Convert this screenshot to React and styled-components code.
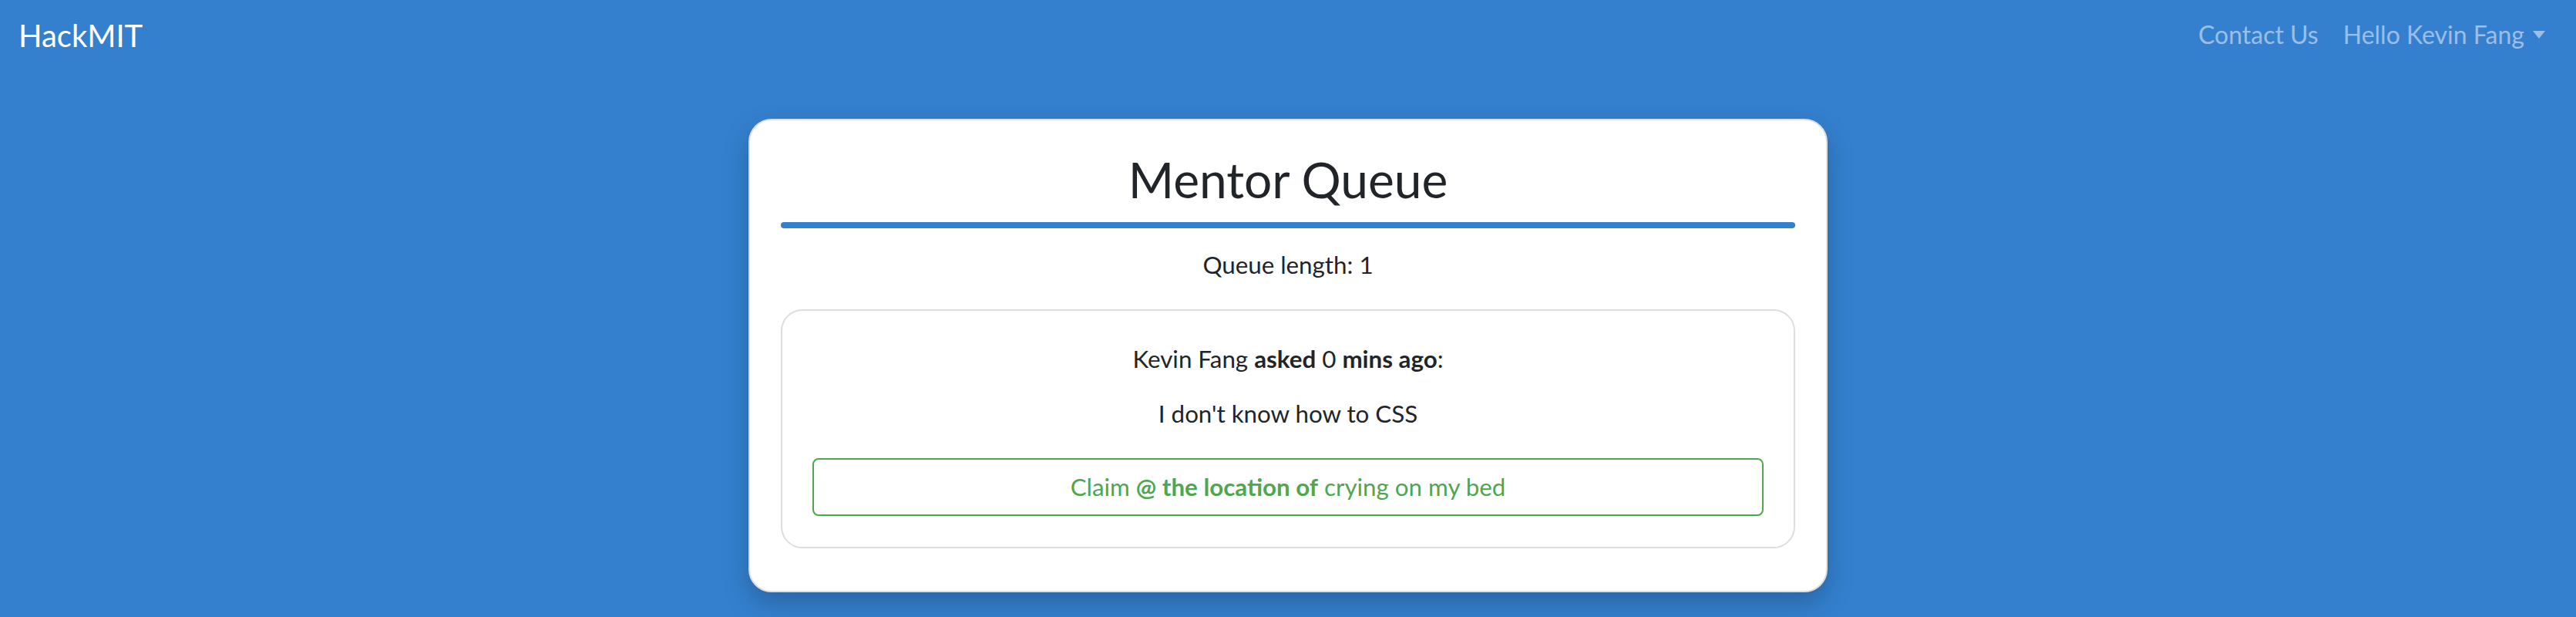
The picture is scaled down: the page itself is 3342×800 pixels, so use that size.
import React from 'react';
import styled, { createGlobalStyle } from 'styled-components';

const BLUE = '#3480cf';
const GREEN = '#4fa64f';
const INK = '#212529';

const GlobalStyle = createGlobalStyle`
    html, body {
        margin: 0;
        padding: 0;
    }
    body {
        background: ${BLUE};
        min-height: 100vh;
        font-family: Lato, "Open Sans", sans-serif;
        color: ${INK};
    }
`;

const Page = styled.div`
    min-height: 100vh;
    background: ${BLUE};
`;

const Navbar = styled.nav`
    height: 91px;
    padding: 0 24px;
    display: flex;
    align-items: center;
    justify-content: space-between;
`;

const Brand = styled.a`
    color: #fff;
    font-size: 40px;
    line-height: 1.2;
    text-decoration: none;
`;

const NavLinks = styled.div`
    display: flex;
    align-items: center;
`;

const NavLink = styled.a`
    display: flex;
    align-items: center;
    padding: 0 16px;
    font-size: 32px;
    line-height: 1.2;
    color: rgba(255, 255, 255, 0.5);
    text-decoration: none;
`;

const Caret = styled.span`
    display: inline-block;
    margin-left: 11px;
    width: 0;
    height: 0;
    border-top: 10px solid rgba(255, 255, 255, 0.5);
    border-left: 8px solid transparent;
    border-right: 8px solid transparent;
`;

const Card = styled.section`
    box-sizing: border-box;
    width: 1400px;
    margin: 63px auto 0;
    padding: 39px 40px 55px;
    background: #fff;
    border: 2px solid #dedede;
    border-radius: 30px;
    box-shadow: 0 14px 34px rgba(0, 0, 0, 0.22);
    text-align: center;
`;

const Title = styled.h1`
    margin: 0 0 16px;
    font-size: 64px;
    font-weight: 400;
    line-height: 1.2;
    color: ${INK};
`;

const Rule = styled.div`
    height: 8px;
    border-radius: 4px;
    background: ${BLUE};
    margin-bottom: 23px;
`;

const Text = styled.p`
    margin: 0 0 ${(p) => p.gap || 0}px;
    font-size: 31.3px;
    line-height: 48px;
    color: ${INK};
`;

const Request = styled.div`
    box-sizing: border-box;
    padding: 38px 39px 40px;
    border: 2px solid #dedede;
    border-radius: 28px;
`;

const ClaimButton = styled.button`
    display: block;
    width: 100%;
    box-sizing: border-box;
    padding: 11.5px 16px;
    background: transparent;
    border: 2px solid ${GREEN};
    border-radius: 8px;
    font-family: Lato, "Open Sans", sans-serif;
    font-size: 31.3px;
    line-height: 48px;
    color: ${GREEN};
    cursor: pointer;
`;

function App() {
    return (
        <Page>
            <GlobalStyle />
            <Navbar>
                <Brand href="#">HackMIT</Brand>
                <NavLinks>
                    <NavLink href="#">Contact Us</NavLink>
                    <NavLink href="#">
                        Hello Kevin Fang
                        <Caret />
                    </NavLink>
                </NavLinks>
            </Navbar>
            <Card>
                <Title>Mentor Queue</Title>
                <Rule />
                <Text gap={34}>Queue length: 1</Text>
                <Request>
                    <Text gap={23}>
                        Kevin Fang <b>asked</b> 0 <b>mins ago</b>:
                    </Text>
                    <Text gap={34}>I don't know how to CSS</Text>
                    <ClaimButton>
                        Claim <b>@ the location of</b> crying on my bed
                    </ClaimButton>
                </Request>
            </Card>
        </Page>
    );
}

export default App;
